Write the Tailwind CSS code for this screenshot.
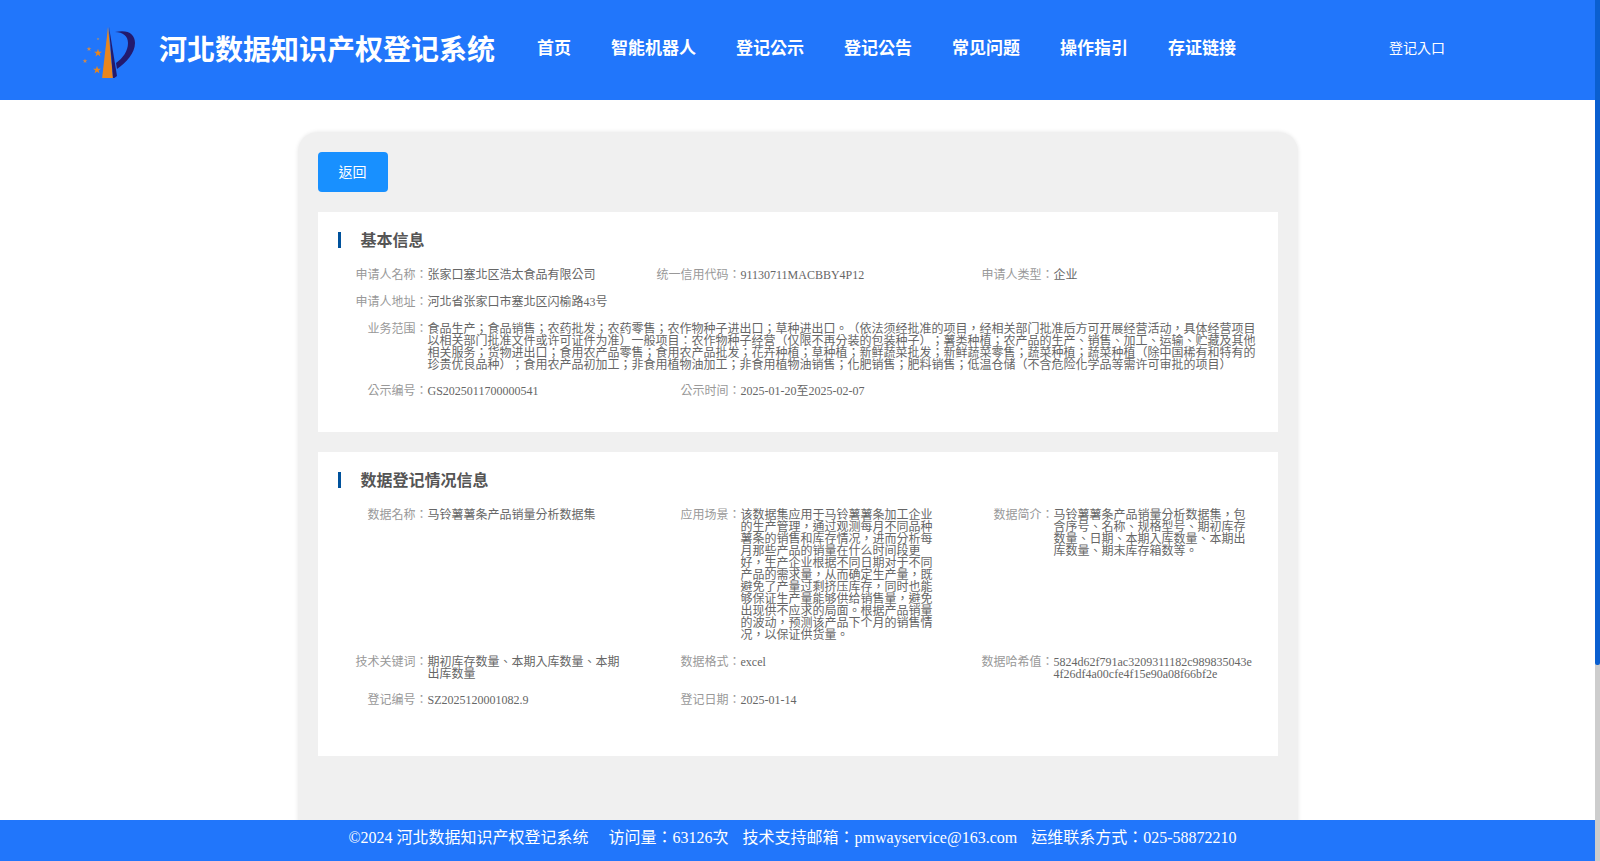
<!DOCTYPE html>
<html lang="zh-TW">
<head>
    <meta charset="UTF-8">
    <title>河北数据知识产权登记系统</title>
    <script src="https://cdn.jsdelivr.net/npm/@tailwindcss/browser@4"></script>
</head>
<body class="h-[861px] overflow-hidden bg-white font-['Liberation_Serif','Noto_Sans_CJK_TC',serif] [text-spacing-trim:space-all]">
<div class="flex h-[861px]">
    <div class="relative w-[1595px] h-[861px] overflow-hidden">
        <!-- Header -->
        <header class="flex h-[100px] items-center bg-[#2176fb] text-white">
            <svg class="ml-[82px] w-[56px] h-[56px]" viewBox="0 0 56 56">
                <path d="M26 5 L20 57 L31 56 Z" fill="#e8861e"/>
                <path d="M27 5 L35 54 L31 57 Z" fill="#231a6e"/>
                <path d="M33 10 C46 7 53 12 53 21 C53 31 44 41 35 47 L34 41 C41 36 46 29 46 21 C46 14 41 10 33 10 Z" fill="#231a6e"/>
                <path transform="translate(16 31) scale(.42)" d="M0-10 L2.400-3.100 9.500-3.100 3.800 1.200 5.900 8.100 0 3.800 -5.900 8.100 -3.800 1.200 -9.500-3.100 -2.400-3.100Z" fill="#e8861e"/>
                <path transform="translate(15 48) scale(.42)" d="M0-10 L2.400-3.100 9.500-3.100 3.800 1.200 5.900 8.100 0 3.800 -5.900 8.100 -3.800 1.200 -9.500-3.100 -2.400-3.100Z" fill="#e8861e"/>
                <path transform="translate(7 27) scale(.25)" d="M0-10 L2.400-3.100 9.500-3.100 3.800 1.200 5.900 8.100 0 3.800 -5.900 8.100 -3.800 1.200 -9.500-3.100 -2.400-3.100Z" fill="#d08a4a"/>
                <path transform="translate(3 39) scale(.25)" d="M0-10 L2.400-3.100 9.500-3.100 3.800 1.200 5.900 8.100 0 3.800 -5.900 8.100 -3.800 1.200 -9.500-3.100 -2.400-3.100Z" fill="#d08a4a"/>
                <path transform="translate(16 17) scale(.15)" d="M0-10 L2.400-3.100 9.500-3.100 3.800 1.200 5.900 8.100 0 3.800 -5.900 8.100 -3.800 1.200 -9.500-3.100 -2.400-3.100Z" fill="#b0906a"/>
            </svg>
            <h1 class="ml-[21px] mt-[1px] w-[378px] text-[28px] leading-none font-bold whitespace-nowrap">河北数据知识产权登记系统</h1>
            <nav class="-mt-[3px] flex gap-[40px] text-[17px] font-bold">
                <a>首页</a><a>智能机器人</a><a>登记公示</a><a>登记公告</a><a>常见问题</a><a>操作指引</a><a>存证链接</a>
            </nav>
            <a class="ml-[153px] -mt-[3px] text-[14px]">登记入口</a>
        </header>

        <!-- Detail card -->
        <main class="mx-auto mt-[32px] w-[1000px] h-[760px] rounded-[20px] bg-[#f0f0f0] p-[20px] shadow-[0_0_4px_rgba(0,0,0,0.1)]">
            <button class="block w-[70px] h-[40px] rounded-[4px] bg-[#1890ff] text-[14px] text-white">返回</button>

            <section class="mt-[20px] h-[220px] bg-white pt-[20px] pl-[20px] text-[12px] leading-[12px]">
                <h2 class="flex h-[16px] items-center border-l-[3px] border-[#00529c] pl-[20px] text-[16px] font-bold text-[#555]"><span class="mt-[1px]">基本信息</span></h2>
                <div class="mt-[21px] grid grid-cols-[90px_223px_90px_223px_90px_1fr]">
                    <span class="text-right text-[#999]">申请人名称：</span><span class="text-[#666]">张家口塞北区浩太食品有限公司</span>
                    <span class="text-right text-[#999] whitespace-nowrap">统一信用代码：</span><span class="text-[#666]">91130711MACBBY4P12</span>
                    <span class="text-right text-[#999]">申请人类型：</span><span class="text-[#666]">企业</span>
                </div>
                <div class="mt-[15px] flex">
                    <span class="w-[90px] text-right text-[#999]">申请人地址：</span><span class="text-[#666]">河北省张家口市塞北区闪榆路43号</span>
                </div>
                <div class="mt-[15px] flex">
                    <span class="w-[90px] shrink-0 text-right text-[#999]">业务范围：</span>
                    <span class="w-[831px] text-[#666]">食品生产；食品销售；农药批发；农药零售；农作物种子进出口；草种进出口。（依法须经批准的项目，经相关部门批准后方可开展经营活动，具体经营项目以相关部门批准文件或许可证件为准）一般项目：农作物种子经营（仅限不再分装的包装种子）；薯类种植；农产品的生产、销售、加工、运输、贮藏及其他相关服务；货物进出口；食用农产品零售；食用农产品批发；花卉种植；草种植；新鲜蔬菜批发；新鲜蔬菜零售；蔬菜种植；蔬菜种植（除中国稀有和特有的珍贵优良品种）；食用农产品初加工；非食用植物油加工；非食用植物油销售；化肥销售；肥料销售；低温仓储（不含危险化学品等需许可审批的项目）</span>
                </div>
                <div class="mt-[14px] grid grid-cols-[90px_223px_90px_223px]">
                    <span class="text-right text-[#999]">公示编号：</span><span class="text-[#666]">GS2025011700000541</span>
                    <span class="text-right text-[#999]">公示时间：</span><span class="text-[#666]">2025-01-20至2025-02-07</span>
                </div>
            </section>

            <section class="mt-[20px] h-[304px] bg-white pt-[20px] pl-[20px] text-[12px] leading-[12px]">
                <h2 class="flex h-[16px] items-center border-l-[3px] border-[#00529c] pl-[20px] text-[16px] font-bold text-[#555]"><span class="mt-[1px]">数据登记情况信息</span></h2>
                <div class="mt-[21px] grid grid-cols-[90px_200px_23px_90px_200px_23px_90px_200px] gap-y-[14.500px]">
                    <span class="text-right text-[#999]">数据名称：</span><span class="text-[#666]">马铃薯薯条产品销量分析数据集</span><i></i>
                    <span class="text-right text-[#999]">应用场景：</span><span class="text-[#666]">该数据集应用于马铃薯薯条加工企业的生产管理，通过观测每月不同品种薯条的销售和库存情况，进而分析每月那些产品的销量在什么时间段更好，生产企业根据不同日期对于不同产品的需求量，从而确定生产量，既避免了产量过剩挤压库存，同时也能够保证生产量能够供给销售量，避免出现供不应求的局面。根据产品销量的波动，预测该产品下个月的销售情况，以保证供货量。</span><i></i>
                    <span class="text-right text-[#999]">数据简介：</span><span class="text-[#666]">马铃薯薯条产品销量分析数据集，包含序号、名称、规格型号、期初库存数量、日期、本期入库数量、本期出库数量、期末库存箱数等。</span>

                    <span class="text-right text-[#999]">技术关键词：</span><span class="text-[#666]">期初库存数量、本期入库数量、本期出库数量</span><i></i>
                    <span class="text-right text-[#999]">数据格式：</span><span class="text-[#666]">excel</span><i></i>
                    <span class="text-right text-[#999]">数据哈希值：</span><span class="text-[#666] break-all">5824d62f791ac3209311182c989835043e4f26df4a00cfe4f15e90a08f66bf2e</span>

                    <span class="text-right text-[#999]">登记编号：</span><span class="text-[#666]">SZ2025120001082.9</span><i></i>
                    <span class="text-right text-[#999]">登记日期：</span><span class="text-[#666]">2025-01-14</span>
                </div>
            </section>
        </main>

        <!-- Footer -->
        <footer class="absolute bottom-0 left-0 right-0 flex h-[41px] justify-center bg-[#2176fb] pr-[10px] pt-[8px] text-[16px] leading-[20px] text-white whitespace-nowrap">
            <span>©2024 河北数据知识产权登记系统</span>
            <span class="ml-[20px]">访问量：63126次</span>
            <span class="ml-[14px]">技术支持邮箱：pmwayservice@163.com</span>
            <span class="ml-[14px]">运维联系方式：025-58872210</span>
        </footer>
    </div>

    <!-- Scrollbar -->
    <div class="w-[5px] h-[861px] bg-[#cdcdcd]">
        <div class="h-[665px] rounded-b-[2px] bg-[#0a5fd0]"></div>
    </div>
</div>
</body>
</html>
